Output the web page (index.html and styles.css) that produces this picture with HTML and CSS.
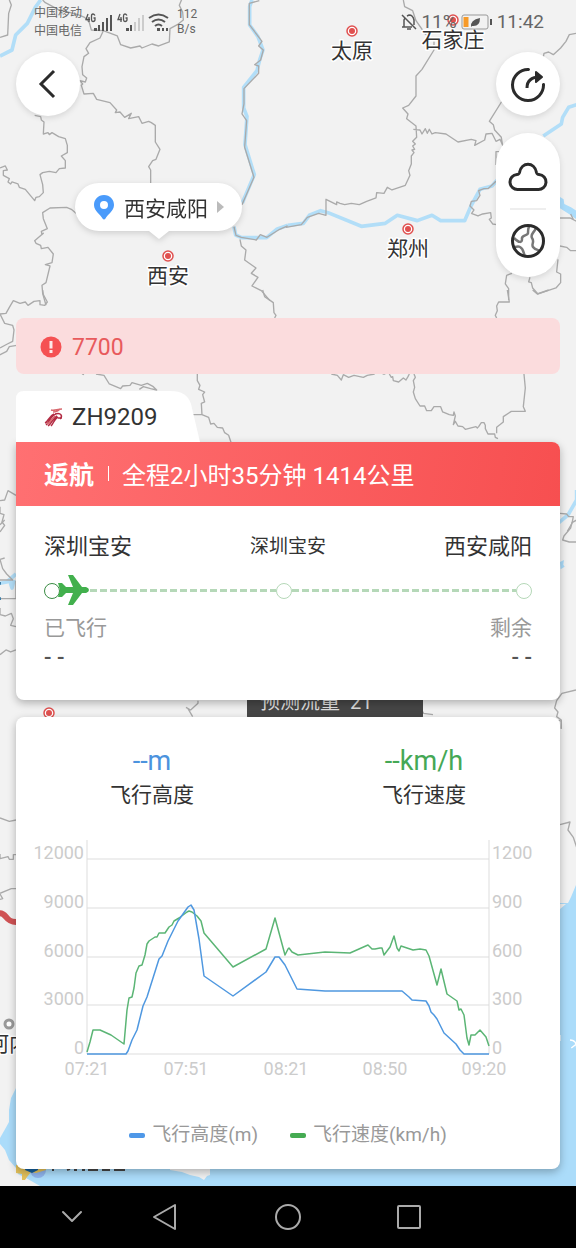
FILE: index.html
```html
<!DOCTYPE html>
<html lang="zh-CN">
<head>
<meta charset="utf-8">
<meta name="viewport" content="width=device-width, initial-scale=1">
<title>ZH9209</title>
<link rel="stylesheet" href="styles.css">
</head>
<body>
<div class="screen">

  <div class="map">
    <svg class="map-canvas" viewBox="0 0 576 1186" preserveAspectRatio="xMidYMin slice" aria-hidden="true">
      <!-- sea -->
      <path class="sea" d="M576 885l-5 12-3 6h-8v1h6l-6 5v277h16zM16 1088l-5 10-2 12v12l-5 9-4 7v6l5 6 4 10 7 8 2 6 8 4 14 8h536v-60H16z"/>
      <path class="land" d="M170 1169h40v6l-3 1-3 4-5-3-9-2-8-3-12-2z"/>

      <g transform="scale(.3333)">
        <path class="river" d="M122 0L106 22 82 70 47 105 36 150 0 168M756 0l-7 20v55l25 35 15 40-10 30-8 32-40 50v62l10 25-6 85 28 90-36 85M702 680l5 25 18 8h75l30-25 34-12"/>
        <path class="border" d="M28 0l6 15-8 25-3 65-23 7M128 0l8 8 38 20 60 16 20 8 14 16 6 22 36 2 42 16 10 26 30 10 28-6 6 6 30-12 20 6 32-12 2-40 22-12 18-14-2-24-10-20 20-50M310 92l-10 22-30 14-12 18 8 14-14 10-6 30 2 24 12 10-4 12-16-4 8 10-4 4 8 26 28-2 10 18 40 10 20 22-4 8 14-2 14 16 20-12-8 16 30-6 10 20 20-6 8 4 12 8v50l14 22-12 30-10 4-12 18 6 10v44l16 18M104 346l18 4 2 10 8 6-2 36 14-4 4 6 8-6 20 12 20 6 6 20v22l-18 10 12 14v22l-18 2-10 12-20-4-20 4-8 6 8 30 2 24-12 12-10 2-4 10-28-34-18-6-4-10-18-6-4 6-8-6 4-10-18-10v-14l12-2-6-12-16 6M228 640l-14-12-14-6-50 2-22 14 2 18 12 30-18 8 2 10 4-4-26 22 4 8 14 6 2 10 20-4 16 20-4 26-20 6 14 4-12 50-12 8 2 24 10 36"/>
        <path class="border" d="M778 2l-30 8v64l38 50-10 14 14 12-8 30-18 14 12 4v22l-44 46v46l-6 30 14 20-6 80 28 90-36 82M702 680l6 26 16 6 45 8 12-16 20 8 38-24 24-10M720 718l4 20 14 12-4 30 34 24-14 16 20 12-18 26 28 14 26 30"/>
      </g>

      <g transform="translate(288 0) scale(.3333)">
        <path class="river" d="M0 676l46-6 18-24 34-14 22 6 100 41 72-9 36-24 60 16 44-16 26 16h72l20-46 26-48 36-10 16-18M766 408l54-36 4-20 18-30 24-8"/>
        <path class="sea" d="M815 590l12 8 2 14 20 10 16 10v26l-22-16-28-18z"/>
        <path class="border" d="M346 0l4 20 24 12 10 30 28 40 26 20v28l-36 58-18 20v60l-22 28-18 8 16 18-4 14 28 22 2 34-12 12 8 8-8 6 6 10-8 2 6 8-8 10v24l-8 20 4 14-14 30-40 14-14-8-10 18-22-2-2 16-28 10-22 10-24-4-20 4-14-4-10-4v8l-32-16v48l-22-6-34 12-18 22-46 8M376 388l20 2 6 12 10-16 6 14 6-12 8 14 10-4 32 4 36 24 40-8 14 4-4 14 30-16 4-18 18-2 12 24 12-6 8 18-4-24-20-22-4-16-12-10 40-64M864 100l-20 4-10 20-16 20-22 20-14-8-14 4-2 12M624 495v-40h10M550 642l8-12-12-12 4-14 16-2 10-16-4-14 16-6h12l24-22M550 640l20 8 14-6 24-4 2 16-6 4 10 14 12 2M816 654h30l20 10M816 738l20 4 12 10h20M672 820l-16 6-4 26 10 14v34M726 832l-4 14 8 2 4 16 16 18 54-18 14-16v-26l-12-6 4-38M846 654l10 4-8-16"/>
      </g>

      <g transform="translate(0 290) scale(.3333)">
        <path class="border" d="M128 0l2 14 12 22-8 10-14-2v-12l-18 2-18 12-8-10-16 4-20-8-12 20-10 18-18 2 14 28 24 6 4 14-4 34-16 8-22 12M50 166l-22 4-8 14-24 12M788 0l6 20 26 18 2 30 6 8-4 8M246 252l6 2M288 252l24 4 16 26 34 14 6-8 22-2 6-8 28 8 18-6 18 10 10 10-18-4-22-6-12 8M592 252v20l8 14-4 12 18 8-6 8 6 22-10 4 2 34h-36M606 374l20 8 6 20 10-2 10 12 16 2 6 14 12 8 8 24M0 632l14-2 10-28 24 14M0 650v20l12 4-6 22 8 10-14 20"/>
      </g>

      <g transform="translate(288 290) scale(.3333)">
        <path class="river" d="M866 600v30l-26 45-30 25"/>
        <path class="border" d="M130 252l18 4 12 14 6-16 16 8 16-6 28 6 12-6 22-4M284 252h8M304 252l6 10 4-2 2 12 16 4 14-12 8 6 6-10 4-8M378 252l4 10-6 10 4 20-4 14 6 20 14 22h14l6 14h14l8-12h20l6 16 20 8 12 2 2-10 4 12-6 26 6-10 8 14 14 2 8 8 32-8 4 4 4-4 8-12h8l4 8v10l8 16h20l2 10 8 4M626 430v-18l20-16v-16l24-16h42l-6-14 6-56-4-42M658 0l6 36h-32l-6 12 2 14-6 14 4 8M734 0l14 12 34-12M816 670l20 2 6 8h14l-4 20-14 24"/>
      </g>

      <g transform="translate(0 520) scale(.3333)">
        <path class="river" d="M0 190l20-4 28-24M28 180l8 24 6-24"/>
        <path class="border" d="M14 0l-14 14M14 114l-14 4 8 28 12 16 18 18H0M48 182v54H0M0 264v20l16 4 18-8 6 16-8 20 16 4M0 404l18-14 14 6 16-6M558 562l14 8 22-20v-8M564 566l14 24"/>
        <path class="route" d="M0 186v8M0 232v8"/>
      </g>

      <g transform="translate(288 520) scale(.3333)">
        <path class="border" d="M866 0l-14 8-4 16-20 24-4 12 20 6h24M864 510l-42 10-16 22-6 22 10 12-4 14 14 10v26M395 560l12 20 28 4"/>
        <path class="sea" d="M816 0l10 0-10 8zM816 126l12-6-2 14 4 6-12 8z"/>
      </g>

      <g transform="translate(0 720) scale(.3333)">
        <path class="border" d="M0 294l28 10 20-4M0 402v14l24-6 4 8h12v-14h10M0 520l34-14h14M0 522l8 14-8 2"/>
        <path class="motorway" d="M-4 580c24-6 18 28 54 26"/>
      </g>

      <g transform="translate(288 720) scale(.3333)">
        <path class="border" d="M812 0l8 4v22M816 314l30-8-6 24 16 22 10 30"/>
        <path class="sea-name" d="M816 945v18M846 960c12 0 20 8 20 24M850 984l16-12"/>
      </g>

      <!-- city markers -->
      <g class="ring">
        <circle cx="352" cy="31" r="5"/><circle cx="453" cy="20" r="5"/>
        <circle cx="408" cy="229" r="5"/><circle cx="168" cy="256" r="5"/><circle cx="49" cy="713" r="5"/>
      </g>
      <g class="dot">
        <circle cx="352" cy="31" r="3"/><circle cx="453" cy="20" r="3"/>
        <circle cx="408" cy="229" r="3"/><circle cx="168" cy="256" r="3"/><circle cx="49" cy="713" r="3"/>
      </g>
      <circle class="foreign" cx="9" cy="1024" r="4"/>
      <g class="city">
        <text x="352" y="58">太原</text>
        <text x="453" y="47">石家庄</text>
        <text x="408" y="256">郑州</text>
        <text x="168" y="283">西安</text>
        <text x="9" y="1051">河内</text>
      </g>
      <rect class="traffic" x="247" y="680" width="176" height="40" rx="4"/>
      <text class="traffic-text" x="260" y="709">预测流量&#160; 21</text>

      <!-- airline badge below the cards -->
      <circle cx="38" cy="1170" r="8" fill="#8fb4ec"/>
      <path d="M16 1165h30v5l-10 3-5-1-4 5-2 3h-3v-6l-6-1z" fill="#e3c15a"/>
      <path d="M26 1165h12v5l-6 3-7-3z" fill="#16609c"/>
      <path d="M53 1168v3M67 1170l3-1M74 1170h3M82 1170h3M88 1170h10M102 1170h8M114 1170h11" stroke="#444" stroke-width="2"/>
    </svg>

    <button class="callout" type="button">
      <svg width="22" height="26" viewBox="0 0 22 26" aria-hidden="true"><path fill="#4a9bfb" fill-rule="evenodd" d="M11 1C5 1 1 5.500 1 11c0 6 7 10 8.500 13.500q1.500 2 3 0C14 21 21 17 21 11 21 5.500 17 1 11 1zm0 6a4 4 0 110 8 4 4 0 010-8z"/></svg>
      <span>西安咸阳</span>
      <svg width="7" height="12" viewBox="0 0 7 12" aria-hidden="true"><path fill="#bbb" d="M0 0l7 6-7 6z"/></svg>
    </button>
  </div>

  <header class="status">
    <div class="carriers"><span>中国移动</span><span>中国电信</span></div>
    <svg class="signals" width="84" height="24" viewBox="0 0 84 24" aria-hidden="true">
      <g fill="none" stroke="#555" stroke-width="1.300">
        <path d="M3 4L1 9.500h4M4 7v5M10 5.500Q9 4 8 4 6.500 4 6.500 6v3.500q0 2 1.500 2 2 0 2-2V8H8.500"/>
        <path d="M35 4l-2 5.500h4M36 7v5M42 5.500Q41 4 40 4q-1.500 0-1.500 2v3.500q0 2 1.500 2 2 0 2-2V8h-1.500"/>
      </g>
      <g fill="#555"><path d="M9 18h3v3H9zM13 15h2v6h-2zM17 12h2v9h-2zM21 8h2v13h-2zM25 5h2v16h-2z"/><path d="M41 18h3v3h-3zM45 15h2v6h-2z"/></g>
      <path fill="#ccc" d="M49 12h2v9h-2zM53 8h2v13h-2zM57 5h2v16h-2z"/>
      <g fill="none" stroke="#555" stroke-width="2"><path d="M64 8q9.500-7 19 0M67 12q6.500-5 13 0M70 16q3.500-3 7 0"/></g>
      <path fill="#555" d="M72 18h3v3h-3zM77 18h2v3h-2zM81 18h2v3h-2z"/>
    </svg>
    <div class="net"><span>112</span><span>B/s</span></div>
    <div class="status-right">
      <svg width="16" height="18" viewBox="0 0 16 18" fill="none" stroke="#555" stroke-width="1.500" aria-hidden="true"><path d="M1 2l14 14M1 14h10M3 14V7l1-2M6 3l2-1q4 0 5 5v5M6 16h4"/></svg>
      <span>11%</span>
      <svg width="32" height="16" viewBox="0 0 32 16" aria-hidden="true">
        <rect x="1" y="1" width="26" height="14" rx="2" fill="none" stroke="#999"/><path fill="#f79a28" d="M2.500 3h5v10h-5z"/><path fill="#555" d="M10 13q-1-7 9-9 0 9-8 8zM29 5h2v6h-2z"/>
      </svg>
      <time>11:42</time>
    </div>
  </header>

  <main class="content">
    <div class="controls">
      <button class="round" type="button" aria-label="返回">
        <svg width="20" height="30" viewBox="0 0 20 30" fill="none" stroke="#2b2b2b" stroke-width="3" aria-hidden="true"><path d="M16 2L3 15l13 13"/></svg>
      </button>
      <div class="tools">
        <button class="round" type="button" aria-label="分享">
          <svg width="36" height="36" viewBox="0 0 36 36" fill="none" stroke="#2b2b2b" stroke-width="3" aria-hidden="true"><path stroke-linecap="round" d="M18.500 3.500a15.500 15.500 0 1015 15"/><path d="M17 22c0-7 4-11 13-11"/><path stroke-linejoin="round" fill="#2b2b2b" stroke-width="2" d="M26 6l6 5-6 5z"/></svg>
        </button>
        <div class="pill">
          <button type="button" aria-label="天气">
            <svg width="40" height="30" viewBox="0 0 40 30" fill="none" stroke="#2b2b2b" stroke-width="3" stroke-linejoin="round" aria-hidden="true"><path d="M10 27.500a7.500 7.500 0 01-1-15q2 0 2.500-2c2-11 15-11 17 0q.500 2 2.500 2a7.500 7.500 0 01-1 15z"/></svg>
          </button>
          <button type="button" aria-label="地图">
            <svg width="36" height="36" viewBox="0 0 36 36" fill="none" aria-hidden="true"><g stroke="#777" stroke-width="2.500"><path d="M4 15c5 5 8 5 8 1-1-4 6-3 6-6s0-4 1-7M26 5c-2 5-6 6-4 10 3 4-1 6 1 9s6 3 7 4M3 24c4 0 5-1 7 0 4 2 3 6 5 9"/></g><circle cx="18" cy="18" r="15.500" stroke="#2b2b2b" stroke-width="3"/></svg>
          </button>
        </div>
      </div>
    </div>

    <div class="alert" role="alert">
      <svg width="22" height="22" viewBox="0 0 22 22" aria-hidden="true"><circle cx="11" cy="11" r="10.500" fill="#f55153"/><path fill="#fde8e8" d="M9.500 5h3v7.500h-3zM9.500 14h3v3h-3z"/></svg>
      <span>7700</span>
    </div>

    <section class="flight">
      <h1 class="tab">
        <svg class="tab-shape" width="184" height="51" viewBox="0 0 184 51" aria-hidden="true"><path fill="#fff" d="M0 8q0-8 8-8h146c12 0 18 4 21 13l9 38H0z"/></svg>
        <svg class="airline" width="20" height="20" viewBox="0 0 20 20" fill="none" stroke-width="1.500" aria-hidden="true"><path stroke="#b22b43" d="M2 18c4-3 4-9 10-11M4 19c4-3 5-8 9-10M7 19c3-3 3-7 7-9M1 16c3-1 4-7 9-9M11 7c6-2 8 2 5 5M14 11h4"/><path stroke="#d8696f" d="M7 3c4 1 6-1 11-1M9 5c3 0 5-1 7-3M3 17c4-2 5-6 8-8"/></svg>
        <span>ZH9209</span>
      </h1>
      <div class="card flight-card">
        <div class="banner"><strong>返航</strong><i class="bar"></i><span>全程2小时35分钟 1414公里</span></div>
        <div class="route-body">
          <div class="airports"><span>深圳宝安</span><span class="via">深圳宝安</span><span>西安咸阳</span></div>
          <div class="track">
            <i class="stop here"></i><i class="dash flown"></i><i class="stop"></i><i class="dash ahead"></i><i class="stop"></i>
            <svg class="plane" width="31" height="30" viewBox="0 0 31 30" aria-hidden="true"><path fill="#42b04d" d="M0 8h4l4 4h7L10 0h5l9 12h4q3 1 3 3t-3 3h-4l-9 12h-5l5-12H8l-4 4H0l2-7z"/></svg>
          </div>
          <div class="pair muted"><span>已飞行</span><span>剩余</span></div>
          <div class="pair value"><span>- -</span><span>- -</span></div>
        </div>
      </div>
    </section>

    <section class="card chart-card">
      <div class="metrics">
        <div><b class="alt">--m</b><span>飞行高度</span></div>
        <div><b class="spd">--km/h</b><span>飞行速度</span></div>
      </div>
      <svg class="chart" viewBox="16 838 544 246" role="img" aria-label="飞行高度与飞行速度">
        <path class="grid" d="M87 859h402M87 908h402M87 957h402M87 1005h402M87 1054h402M87 840v214M489 840v214"/>
        <polyline class="line spd-line" points="87,1052 90,1042 93,1030 100,1030 111,1035 124,1044 127,1010 129,998 132,997 134,988 136,973 139,966 142,965 145,955 147,944 149,941 155,937 157,937 159,933 165,933 169,927 172,925 174,921 179,918 187,912 189,911 192,912 197,916 201,921 204,933 233,967 266,949 275,918 285,955 288,949 289,948 292,952 298,955 325,952 350,953 368,945 372,949 375,949 380,948 382,948 384,955 390,947 394,936 397,948 399,951 401,946 413,950 420,949 426,950 429,956 437,985 441,969 447,994 457,1001 459,1010 461,1009 464,1015 467,1038 469,1045 471,1035 475,1035 480,1030 486,1037 489,1046"/>
        <polyline class="line alt-line" points="87,1054 126,1054 128,1051 132,1040 137,1030 139,1022 143,1006 147,997 159,959 162,956 168,941 178,921 188,907 191,905 194,910 199,939 204,976 233,996 266,972 275,957 279,957 285,965 297,989 325,991 402,991 409,997 412,1000 426,1001 429,1006 431,1012 434,1015 437,1019 444,1033 456,1044 460,1050 464,1054 489,1054"/>
        <g class="axis end"><text x="84" y="859">12000</text><text x="84" y="908">9000</text><text x="84" y="957">6000</text><text x="84" y="1005">3000</text><text x="84" y="1054">0</text></g>
        <g class="axis"><text x="492" y="859">1200</text><text x="492" y="908">900</text><text x="492" y="957">600</text><text x="492" y="1005">300</text><text x="492" y="1054">0</text></g>
        <g class="axis mid"><text x="87" y="1075">07:21</text><text x="186" y="1075">07:51</text><text x="286" y="1075">08:21</text><text x="385" y="1075">08:50</text><text x="484" y="1075">09:20</text></g>
      </svg>
      <div class="legend"><span class="key alt-key">飞行高度(m)</span><span class="key spd-key">飞行速度(km/h)</span></div>
    </section>
  </main>

  <nav class="navbar">
    <button type="button" aria-label="收起"><svg width="22" height="14" viewBox="0 0 22 14" aria-hidden="true"><path d="M2 2l9 9 9-9"/></svg></button>
    <button type="button" aria-label="后退"><svg width="26" height="28" viewBox="0 0 26 28" aria-hidden="true"><path d="M23 2v24L2 14z"/></svg></button>
    <button type="button" aria-label="主页"><svg width="28" height="28" viewBox="0 0 28 28" aria-hidden="true"><circle cx="14" cy="14" r="12"/></svg></button>
    <button type="button" aria-label="最近任务"><svg width="26" height="26" viewBox="0 0 26 26" aria-hidden="true"><rect x="2" y="2" width="22" height="22" rx="1"/></svg></button>
  </nav>
</div>
</body>
</html>
```
FILE: styles.css
```css
* { box-sizing: border-box; }
body { margin: 0; font-family: Roboto, "Noto Sans CJK SC", sans-serif; color: #333; background: #f2f2f2; }
button { border: 0; padding: 0; background: #fff; font: inherit; color: inherit; cursor: pointer; }
svg { display: block; flex: none; }

.screen { position: relative; min-height: 100vh; display: flex; flex-direction: column; overflow: hidden; }

/* map */
.map { position: absolute; inset: 0; }
.map-canvas { width: 100%; }
.sea { fill: #abdcfa; }
.land { fill: #f2f2f2; }
.river { fill: none; stroke: #b2def8; stroke-width: 11; stroke-linejoin: round; }
.border { fill: none; stroke: #aaa; stroke-width: 4; stroke-linejoin: round; }
.route { fill: none; stroke: #3f7fa8; stroke-width: 6; }
.motorway { fill: none; stroke: #cf5254; stroke-width: 18; }
.sea-name { fill: none; stroke: #fff; stroke-width: 4; }
.ring { fill: #fff; stroke: #e0504f; stroke-width: 1.500; }
.dot { fill: #e0504f; }
.foreign { fill: #fff; stroke: #999; stroke-width: 3; }
.city { font-size: 21px; text-anchor: middle; fill: #333; stroke: #fff; stroke-width: 3; stroke-linejoin: round; paint-order: stroke; }
.traffic { fill: #464646; }
.traffic-text { font-size: 20px; fill: #ddd; }
.callout { position: absolute; left: 75px; top: 183px; height: 48px; padding: 0 18px; display: flex; align-items: center; gap: 9px; border-radius: 24px; font-size: 21px; filter: drop-shadow(0 2px 3px rgba(0, 0, 0, .15)); }
.callout::after { content: ""; position: absolute; left: 50%; top: 100%; margin-left: -10px; border: 10px solid transparent; border-top: 8px solid #fff; border-bottom: 0; }

/* status bar */
.status { position: relative; height: 44px; padding: 0 32px 0 34px; display: flex; align-items: center; color: #666; font-size: 12px; line-height: 18px; }
.carriers, .net { display: flex; flex-direction: column; }
.signals { margin: 0 8px 0 3px; }
.net { line-height: 15px; }
.status-right { margin-left: auto; display: flex; align-items: center; gap: 4px; font-size: 19px; }

/* content column */
.content { position: relative; padding: 8px 16px 17px; display: flex; flex-direction: column; gap: 17px; }
.controls { display: flex; justify-content: space-between; align-items: flex-start; margin-bottom: 24px; }
.tools { display: flex; flex-direction: column; gap: 17px; }
.round { width: 64px; height: 64px; border-radius: 32px; display: flex; align-items: center; justify-content: center; box-shadow: 0 2px 6px rgba(0, 0, 0, .12); }
.pill { width: 64px; padding: 12px 0 5px; border-radius: 32px; background: #fff; display: flex; flex-direction: column; align-items: center; box-shadow: 0 2px 6px rgba(0, 0, 0, .12); }
.pill button { height: 63px; width: 36px; display: flex; align-items: center; justify-content: center; }
.pill button + button { height: 64px; border-top: 2px solid #eee; }

.alert { height: 56px; padding: 2px 24px 0; border-radius: 8px; background: #fbdcdd; color: #e85a5c; font-size: 23px; display: flex; align-items: center; gap: 10px; }

.tab { position: relative; margin: 0; height: 51px; padding: 0 28px; display: flex; align-items: center; gap: 8px; font-size: 24px; font-weight: 400; }
.tab-shape { position: absolute; left: 0; top: 0; }
.airline, .tab span { position: relative; }

.card { background: #fff; border-radius: 8px; box-shadow: 0 3px 8px rgba(0, 0, 0, .28); }
.flight-card { border-top-left-radius: 0; }
.banner { height: 64px; padding: 0 28px 2px; display: flex; align-items: center; border-radius: 0 8px 0 0; background: linear-gradient(100deg, #ff7072, #f74f50); color: #fff; font-size: 24px; }
.banner strong { font-size: 25px; }
.bar { width: 1px; height: 15px; margin: 0 13px 0 14px; background: #fff; }
.route-body { padding: 25px 28px 22px; }
.airports { display: grid; grid-template-columns: 1fr auto 1fr; align-items: center; font-size: 22px; line-height: 32px; }
.airports :last-child { text-align: right; }
.airports .via { font-size: 19px; }
.track { position: relative; height: 55px; display: flex; align-items: center; }
.stop { width: 16px; height: 16px; border: 1px solid #b5d8b8; border-radius: 50%; }
.here { border-color: #3a8c44; }
.dash { height: 3px; background: repeating-linear-gradient(90deg, #b5d8b8 0 7px, transparent 7px 10px); }
.flown { flex: 216 1 0; }
.ahead { flex: 224 1 0; }
.plane { position: absolute; left: 14px; top: 12px; }
.pair { display: flex; justify-content: space-between; }
.muted { font-size: 21px; line-height: 20px; color: #999; }
.value { font-size: 22px; line-height: 40px; font-weight: 500; color: #555; }

/* chart */
.chart-card { padding: 27px 0 20px; }
.metrics { display: grid; grid-template-columns: 1fr 1fr; text-align: center; }
.metrics b { display: block; font-size: 27px; line-height: 34px; font-weight: 400; }
.metrics span { display: block; font-size: 21px; line-height: 34px; }
.alt { color: #4c93de; }
.spd { color: #45a855; }
.chart { width: 100%; margin: 26px 0 37px; }
.grid { stroke: #ddd; stroke-width: 1; fill: none; }
.line { fill: none; stroke-width: 1.500; stroke-linejoin: round; }
.spd-line { stroke: #5bb575; }
.alt-line { stroke: #4f98e0; }
.axis { font-size: 18px; fill: #ccc; }
.end { text-anchor: end; }
.mid { text-anchor: middle; }
.legend { display: flex; justify-content: center; gap: 32px; font-size: 19px; line-height: 28px; color: #999; }
.key { display: flex; align-items: center; gap: 7px; }
.key::before { content: ""; width: 16px; height: 5px; border-radius: 2px; }
.alt-key::before { background: #4f98e8; }
.spd-key::before { background: #45ab52; }

/* system navigation */
.navbar { position: relative; flex: 1; min-height: 62px; padding: 0 122px 0 26px; display: grid; grid-template-columns: 92fr 94fr 152fr 90fr; background: #000; }
.navbar button { display: flex; align-items: center; justify-content: center; background: none; }
.navbar svg { fill: none; stroke: #aaa; stroke-width: 2; stroke-linejoin: round; stroke-linecap: round; }
```
